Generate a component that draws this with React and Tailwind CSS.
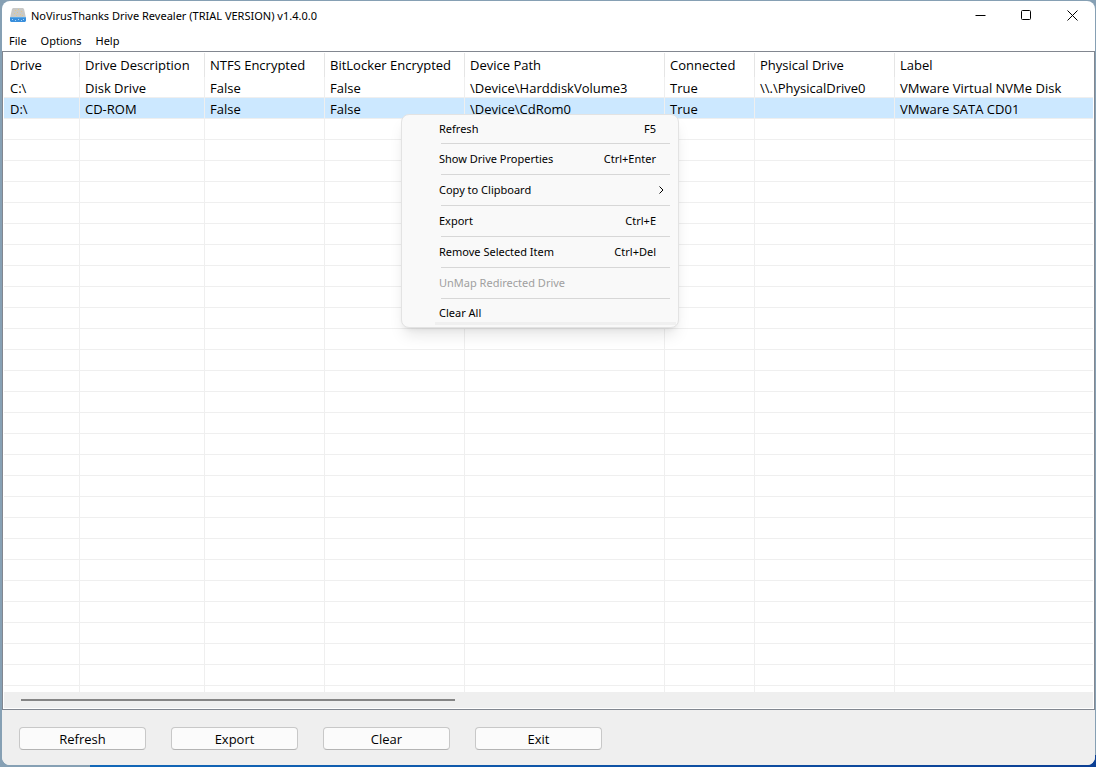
import { useState } from "react";

const columns = [
    { key: "drive", label: "Drive", width: "w-[76px]" },
    { key: "description", label: "Drive Description", width: "w-[125px]" },
    { key: "ntfs", label: "NTFS Encrypted", width: "w-[120px]" },
    { key: "bitlocker", label: "BitLocker Encrypted", width: "w-[140px]" },
    { key: "path", label: "Device Path", width: "w-[200px]" },
    { key: "connected", label: "Connected", width: "w-[90px]" },
    { key: "physical", label: "Physical Drive", width: "w-[140px]" },
    { key: "label", label: "Label", width: "" },
];

const drives = [
    {
        drive: "C:\\",
        description: "Disk Drive",
        ntfs: "False",
        bitlocker: "False",
        path: "\\Device\\HarddiskVolume3",
        connected: "True",
        physical: "\\\\.\\PhysicalDrive0",
        label: "VMware Virtual NVMe Disk",
    },
    {
        drive: "D:\\",
        description: "CD-ROM",
        ntfs: "False",
        bitlocker: "False",
        path: "\\Device\\CdRom0",
        connected: "True",
        physical: "",
        label: "VMware SATA CD01",
    },
];

// empty grid rows below the data
const emptyRows = Array.from({ length: 28 }, (_, i) => i);

const menuItems = [
    { label: "Refresh", shortcut: "F5" },
    { label: "Show Drive Properties", shortcut: "Ctrl+Enter" },
    { label: "Copy to Clipboard", submenu: true },
    { label: "Export", shortcut: "Ctrl+E" },
    { label: "Remove Selected Item", shortcut: "Ctrl+Del" },
    { label: "UnMap Redirected Drive", disabled: true },
    { label: "Clear All" },
];

const DriveIcon = () => (
    <svg width="16" height="16" viewBox="0 0 16 16" aria-hidden="true">
        <path d="M3 0h10l1 1 2 9H0l2-9z" fill="#c9c9c7" />
        <path d="M0 9h16v4l-1 1H1l-1-1z" fill="#3a8fdc" />
        <path d="M0 9h16v1H0z" fill="#5aa9e8" />
        <g fill="#e3c98a">
            <path d="M5 2h1v1H5zM8 1h1v1H8zM11 3h1v1h-1zM4 5h1v1H4zM7 4h1v1H7zM10 6h1v1h-1zM6 7h1v1H6zM12 7h1v1h-1z" />
        </g>
        <path d="M2 11h1v1H2zM5 12h1v1H5zM8 11h1v1H8zM11 12h1v1h-1zM13 11h1v1h-1z" fill="#a9d3f5" />
    </svg>
);

const TitleBar = () => (
    <header className="flex h-[30px] shrink-0 items-center justify-between pl-2">
        <div className="flex items-center gap-[5px]">
            <DriveIcon />
            <h1 className="text-[11px]">NoVirusThanks Drive Revealer (TRIAL VERSION) v1.4.0.0</h1>
        </div>
        <div className="flex pb-[2px]">
            <button aria-label="Minimize" className="flex h-7 w-[46px] items-center justify-center">
                <svg width="11" height="11" viewBox="0 0 11 11" stroke="#000" fill="none">
                    <path d="M0.5 5.5h10" />
                </svg>
            </button>
            <button aria-label="Maximize" className="flex h-7 w-[46px] items-center justify-center">
                <svg width="11" height="11" viewBox="0 0 11 11" stroke="#000" fill="none">
                    <rect x="0.5" y="0.5" width="9" height="9" rx="1" />
                </svg>
            </button>
            <button aria-label="Close" className="flex h-7 w-[46px] items-center justify-center">
                <svg width="11" height="11" viewBox="0 0 11 11" stroke="#000" fill="none">
                    <path d="M0.5 0.5l10 10M10.5 0.5l-10 10" />
                </svg>
            </button>
        </div>
    </header>
);

const MenuBar = () => (
    <nav className="flex h-5 shrink-0 items-center gap-[14px] pl-[7px] text-[11px]">
        <button>File</button>
        <button>Options</button>
        <button>Help</button>
    </nav>
);

const DriveTable = ({ selected, onSelect }) => (
    <table className="w-full table-fixed border-separate border-spacing-0 text-left font-['Open_Sans',sans-serif] text-[13px]">
        <thead>
            <tr>
                {columns.map((col) => (
                    <th
                        key={col.key}
                        scope="col"
                        className={`h-6 border-r border-[#e5e5e5] p-0 pl-[5px] leading-[18px] font-normal whitespace-nowrap first:pl-[6px] last:border-r-0 ${col.width}`}
                    >
                        {col.label}
                    </th>
                ))}
            </tr>
        </thead>
        <tbody>
            {drives.map((item) => (
                <tr
                    key={item.drive}
                    onClick={() => onSelect(item.drive)}
                    className={selected === item.drive ? "bg-[#cce8ff]" : ""}
                >
                    {columns.map((col) => (
                        <td
                            key={col.key}
                            className="h-[21px] border-r border-b border-[#efefef] p-0 pt-[2px] pl-[5px] leading-[18px] whitespace-nowrap first:pl-[6px] last:border-r-0"
                        >
                            {item[col.key]}
                        </td>
                    ))}
                </tr>
            ))}
            {emptyRows.map((row) => (
                <tr key={row}>
                    {columns.map((col) => (
                        <td key={col.key} className="h-[21px] border-r border-b border-[#efefef] p-0 last:border-r-0"></td>
                    ))}
                </tr>
            ))}
        </tbody>
    </table>
);

const ContextMenu = () => (
    <ul className="absolute top-[114px] left-[401px] w-[278px] rounded-lg border border-[#e3e3e3] bg-[#f9f9f9] pr-2 pb-[2px] text-[11px] shadow-lg">
        {menuItems.map((item) => (
            <li key={item.label} className="group">
                <button
                    disabled={item.disabled}
                    className="flex h-[30px] w-full items-center justify-between pr-[14px] pl-[37px] group-first:h-7 group-last:h-[23px] group-last:pt-[6px] disabled:text-[#a0a0a0]"
                >
                    <span>{item.label}</span>
                    {item.shortcut && <span>{item.shortcut}</span>}
                    {item.submenu && (
                        <svg width="5" height="8" viewBox="0 0 5 8" stroke="#000" fill="none" className="-mr-2">
                            <path d="M0.5 0.5L4 4L0.5 7.5" />
                        </svg>
                    )}
                </button>
                <div className="ml-[39px] h-px bg-[#d7d7d7] group-last:-mr-[6px] group-last:ml-[33px] group-last:h-[3px] group-last:bg-[#f0f0f0]"></div>
            </li>
        ))}
    </ul>
);

const App = () => {
    const [selected, setSelected] = useState("D:\\");

    return (
        <div className="relative flex h-screen flex-col bg-[#86a0b4] bg-[linear-gradient(to_right,#86a0b4_90px,#1268b8_90px,#0b3f94)] bg-size-[100%_12px] bg-bottom bg-no-repeat pt-px pr-px pb-[2px] pl-[2px] font-['Noto_Sans',sans-serif] text-black">
            <div className="flex min-h-0 flex-1 flex-col overflow-hidden rounded-lg bg-white">
                <TitleBar />
                <MenuBar />
                <main className="flex min-h-0 flex-1 flex-col border border-[#828790] p-px">
                    <div className="min-h-0 flex-1 overflow-hidden">
                        <DriveTable selected={selected} onSelect={setSelected} />
                    </div>
                    <div className="flex h-4 shrink-0 items-center bg-[#efefef] pl-[17px]">
                        <div className="h-[2px] w-[434px] bg-[#858585]"></div>
                    </div>
                </main>
                <footer className="flex h-[55px] shrink-0 items-center gap-[25px] bg-[#efefef] pt-px pl-[17px] font-['Open_Sans',sans-serif] text-[13px]">
                    {["Refresh", "Export", "Clear", "Exit"].map((name) => (
                        <button
                            key={name}
                            className="h-[23px] w-[127px] rounded border border-[#c8c8c8] border-b-[#b4b4b4] bg-[#fbfbfb] pt-px leading-5"
                        >
                            {name}
                        </button>
                    ))}
                </footer>
            </div>
            <ContextMenu />
        </div>
    );
};

export default App;
